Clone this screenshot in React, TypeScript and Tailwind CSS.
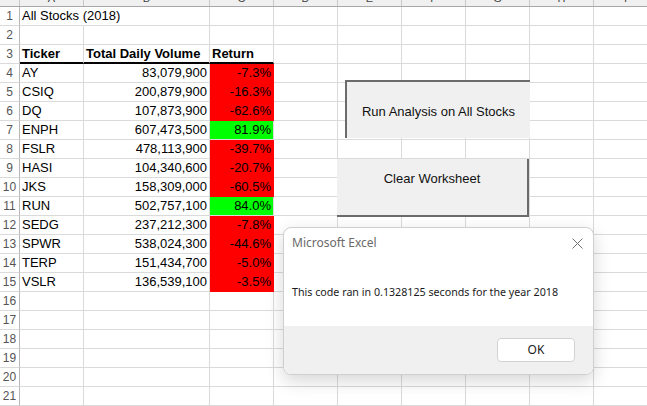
import type { ReactNode } from 'react'

const colW = [
  'w-[64px]',
  'w-[126px]',
  'w-[64px]',
  'w-[64px]',
  'w-[64px]',
  'w-[64px]',
  'w-[64px]',
  'w-[64px]',
  'w-[64px]',
]
const letters = ['A', 'B', 'C', 'D', 'E', 'F', 'G', 'H', 'I']

const stocks = [
  { t: 'AY', v: '83,079,900', r: '-7.3%', up: false },
  { t: 'CSIQ', v: '200,879,900', r: '-16.3%', up: false },
  { t: 'DQ', v: '107,873,900', r: '-62.6%', up: false },
  { t: 'ENPH', v: '607,473,500', r: '81.9%', up: true },
  { t: 'FSLR', v: '478,113,900', r: '-39.7%', up: false },
  { t: 'HASI', v: '104,340,600', r: '-20.7%', up: false },
  { t: 'JKS', v: '158,309,000', r: '-60.5%', up: false },
  { t: 'RUN', v: '502,757,100', r: '84.0%', up: true },
  { t: 'SEDG', v: '237,212,300', r: '-7.8%', up: false },
  { t: 'SPWR', v: '538,024,300', r: '-44.6%', up: false },
  { t: 'TERP', v: '151,434,700', r: '-5.0%', up: false },
  { t: 'VSLR', v: '136,539,100', r: '-3.5%', up: false },
]

const Cell = ({ w, className = '', children }: { w: string; className?: string; children?: ReactNode }) => (
  <div className={`${w} h-full shrink-0 whitespace-nowrap border-r border-b border-[#dadada] ${className}`}>
    {children}
  </div>
)

const SheetRow = ({ n }: { n: number }) => {
  const s = n >= 4 && n <= 15 ? stocks[n - 4] : null
  return (
    <div className="flex h-[19px] leading-[18px]">
      <div className="flex w-[20px] shrink-0 justify-center border-r border-b border-r-[#b8b8b8] border-b-[#dadada] text-[12px] text-[#555]">
        {n}
      </div>
      {colW.map((w, c) => {
        if (n === 1 && c === 0)
          return (
            <Cell key={c} w={w} className="border-r-transparent pl-[2px]">
              All Stocks (2018)
            </Cell>
          )
        if (n === 3 && c < 3)
          return (
            <Cell key={c} w={w} className="border-b-2 border-b-black pl-[2px] font-bold leading-[17px]">
              {['Ticker', 'Total Daily Volume', 'Return'][c]}
            </Cell>
          )
        if (s && c === 0)
          return (
            <Cell key={c} w={w} className="pl-[2px]">
              {s.t}
            </Cell>
          )
        if (s && c === 1)
          return (
            <Cell key={c} w={w} className="pr-[2px] text-right">
              {s.v}
            </Cell>
          )
        if (s && c === 2)
          return (
            <Cell
              key={c}
              w={w}
              className={`pr-[2px] text-right ${
                s.up ? 'border-[#00ff00] bg-[#00ff00]' : 'border-[#ff0000] bg-[#ff0000]'
              }`}
            >
              {s.r}
            </Cell>
          )
        return <Cell key={c} w={w} />
      })}
    </div>
  )
}

const MessageBox = () => (
  <div className="absolute left-[283px] top-[227px] flex h-[148px] w-[311px] flex-col overflow-hidden rounded-[8px] border border-[#cfcfcf] bg-white font-['Noto_Sans',sans-serif] shadow-[0_6px_18px_rgba(0,0,0,0.16)]">
    <div className="h-[98px] pl-[8px] pr-[10px] pt-[7px]">
      <div className="flex items-center justify-between leading-[16px]">
        <span className="text-[12px] text-[#6a6a6a]">Microsoft Excel</span>
        <svg width="11" height="11" viewBox="0 0 11 11" className="text-[#707070]">
          <path d="M0.5 0.5 L10.5 10.5 M10.5 0.5 L0.5 10.5" stroke="currentColor" strokeWidth="1" fill="none" />
        </svg>
      </div>
      <p className="mt-[33px] text-[10.7px] leading-[16px] text-[#1b1b1b]">
        This code ran in 0.1328125 seconds for the year 2018
      </p>
    </div>
    <div className="flex h-[48px] justify-end bg-[#f0f0f0] pr-[18px] pt-[12px]">
      <button className="h-[24px] w-[78px] rounded-[4px] border border-[#d2d2d2] bg-white text-[12px] text-[#1b1b1b]">
        OK
      </button>
    </div>
  </div>
)

export default function App() {
  return (
    <div className="relative h-[406px] w-[647px] overflow-hidden bg-white font-['Liberation_Sans',Arial,sans-serif] text-[13px] text-black">
      <div className="flex h-[7px] overflow-hidden border-b border-[#a8a8a8] bg-[#f0f0f0]">
        <div className="w-[20px] shrink-0 border-r border-[#c8c8c8]" />
        {colW.map((w, c) => (
          <div key={c} className={`${w} shrink-0 border-r border-[#c8c8c8] text-center text-[11px] leading-[12px] text-[#444]`}>
            <span className="-mt-[8px] block">{letters[c]}</span>
          </div>
        ))}
      </div>
      {Array.from({ length: 21 }, (_, i) => (
        <SheetRow key={i} n={i + 1} />
      ))}

      <div className="absolute left-[345px] top-[80px] flex h-[58px] w-[185px] items-center justify-center border-l-2 border-t-2 border-[#6b6b6b] bg-[#f0f0f0] pt-[4px] text-[13px] text-[#111]">
        Run Analysis on All Stocks
      </div>
      <div className="absolute left-[337px] top-[159px] flex h-[58px] w-[192px] flex-col items-center justify-start border-b-2 border-r-2 border-[#6b6b6b] bg-[#f0f0f0] pt-[12px] text-[13px] leading-[16px] text-[#111]">
        Clear Worksheet
      </div>

      <MessageBox />
    </div>
  )
}
